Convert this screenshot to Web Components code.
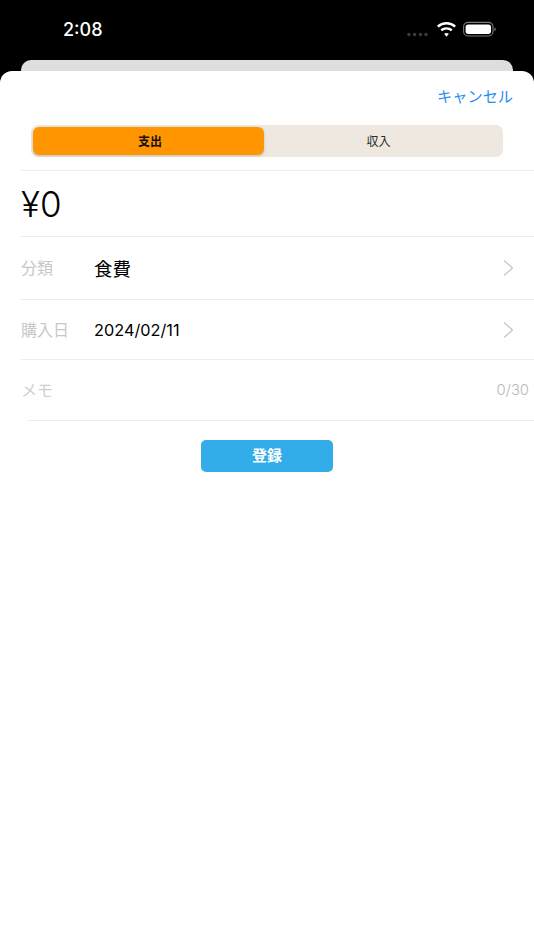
<!DOCTYPE html>
<html lang="ja"><head><meta charset="utf-8">
<style>
html,body{margin:0;padding:0;height:100%;background:#000}
body{font-family:Inter,"Noto Sans CJK JP",sans-serif;overflow:hidden}
</style></head><body>
<app-shell>
  <status-bar slot="status" time="2:08"></status-bar>
  <form-sheet slot="sheet">
    <sheet-header label="キャンセル"></sheet-header>
    <segment-control first="支出" second="収入"></segment-control>
    <amount-row value="¥0"></amount-row>
    <form-row label="分類" h="63" chevron big>食費</form-row>
    <form-row label="購入日" h="60" chevron>2024/02/11</form-row>
    <memo-row label="メモ" count="0/30"></memo-row>
    <submit-button>登録</submit-button>
  </form-sheet>
</app-shell>
<script>
function def(name, html){
  customElements.define(name, class extends HTMLElement{
    connectedCallback(){
      if(this.shadowRoot) return;
      const r=this.attachShadow({mode:'open'});
      r.innerHTML=typeof html==='function'?html(this):html;
    }
  });
}
const CJK='Inter,"Noto Sans CJK JP",sans-serif';
def('app-shell',`<style>
:host{display:flex;flex-direction:column;width:534px;height:950px;background:#000;overflow:hidden}
.back{height:11px;margin:0 21px;flex:none;background:#dedede;border-radius:10px 10px 0 0}
.wrap{flex:1;display:flex;flex-direction:column;min-height:0}
</style><slot name="status"></slot><div class="back"></div><div class="wrap"><slot name="sheet"></slot></div>`);
def('status-bar',h=>`<style>
:host{display:flex;height:60px;flex:none;color:#fff;box-sizing:border-box;padding:0 36px 0 63px;align-items:flex-start;justify-content:space-between}
.t{font:500 18px/20px Inter,sans-serif;margin-top:20px}
.r{display:flex;align-items:flex-start;margin-top:21px}
svg{display:block}
</style><div class="t">${h.getAttribute('time')}</div><div class="r">
<svg width="92" height="18" viewBox="0 0 92 18">
<g fill="#3c3c3c"><circle cx="2.9" cy="13.5" r="1.7"/><circle cx="8.6" cy="13.5" r="1.7"/><circle cx="14.4" cy="13.5" r="1.7"/><circle cx="20" cy="13.5" r="1.7"/></g>
<g fill="none" stroke="#fff" stroke-width="2.4"><path d="M31.8 5.6a13 13 0 0 1 17.4 0"/><path d="M35.2 9.3a8.4 8.4 0 0 1 10.6 0"/></g>
<path d="M38.1 12.8a4 4 0 0 1 4.8 0L40.5 15.7z" fill="#fff"/>
<rect x="57.6" y="1.4" width="29.4" height="13.6" rx="4.4" fill="none" stroke="#7a7a7a" stroke-width="1.1"/>
<rect x="59.6" y="3.4" width="25.4" height="9.6" rx="2.7" fill="#fff"/>
<path d="M88.4 6.4c1 .3 1.4 1 1.4 1.8s-.4 1.5-1.4 1.8z" fill="#7a7a7a"/>
</svg></div>`);
def('form-sheet',`<style>
:host{display:flex;flex-direction:column;flex:1;background:#fff;border-radius:12px 12px 0 0;overflow:hidden}
</style><slot></slot>`);
def('sheet-header',h=>`<style>
:host{display:flex;justify-content:flex-end;align-items:center;height:54px;box-sizing:border-box;padding:0 21px 3px 0;flex:none}
span{font:15.2px/20px ${CJK};color:#2a8cf0}
</style><span>${h.getAttribute('label')}</span>`);
def('segment-control',h=>`<style>
:host{display:flex;flex:none;height:32px;margin:0 31px;box-sizing:border-box;padding:2px;background:#eee8e1;border-radius:7px}
.a,.b{display:flex;align-items:center;justify-content:center;font:12px/16px ${CJK};color:#2b2b2b;padding-top:1px;box-sizing:border-box}
.a{width:231px;padding-left:3px;background:#ff9500;border-radius:6px;color:#111;font-weight:600;box-shadow:0 1px 3px rgba(0,0,0,.18)}
.b{flex:1;padding-right:8px}
</style><div class="a">${h.getAttribute('first')}</div><div class="b">${h.getAttribute('second')}</div>`);
def('amount-row',h=>`<style>
:host{display:flex;align-items:center;flex:none;height:67px;margin:13px 0 0 21px;box-sizing:border-box;border-top:1px solid #ececec;border-bottom:1px solid #ececec}
span{font:300 35px/40px Inter,sans-serif;color:#000}
</style><span>${h.getAttribute('value')}</span>`);
def('form-row',h=>`<style>
:host{display:flex;align-items:center;flex:none;height:${h.getAttribute('h')}px;margin-left:21px;box-sizing:border-box;border-bottom:1px solid #ececec;padding-right:20px}
.l{width:73px;font:16px/20px ${CJK};color:#c8c8c8;flex:none}
.v{flex:1;font:${h.hasAttribute('big')?'18.5px':'16.3px'}/24px ${CJK};color:#000;${h.hasAttribute('big')?'padding-top:1px;':''}}
svg{display:block;flex:none}
</style><div class="l">${h.getAttribute('label')}</div><div class="v"><slot></slot></div>
<svg width="11" height="18" viewBox="0 0 11 18"><path d="M1.2 1.5l8.2 7.5-8.2 7.5" fill="none" stroke="#c6c6c6" stroke-width="1.3"/></svg>`);
def('memo-row',h=>`<style>
:host{display:block;flex:none;height:61px;box-sizing:border-box}
.in{display:flex;align-items:center;justify-content:space-between;height:60px;padding:0 5px 0 21px;box-sizing:border-box}
.l{font:16px/20px ${CJK};color:#d0d0d0}
.c{font:300 14.8px/20px Inter,sans-serif;color:#b8b8b8}
.line{height:1px;margin-left:28px;background:#ececec}
</style><div class="in"><span class="l">${h.getAttribute('label')}</span><span class="c">${h.getAttribute('count')}</span></div><div class="line"></div>`);
def('submit-button',`<style>
:host{display:flex;align-self:center;align-items:center;justify-content:center;flex:none;width:132px;height:32px;margin-top:19px;background:#32ade9;border-radius:5px;color:#fff;font:600 15px/20px ${CJK}}
</style><slot></slot>`);
</script>
</body></html>
